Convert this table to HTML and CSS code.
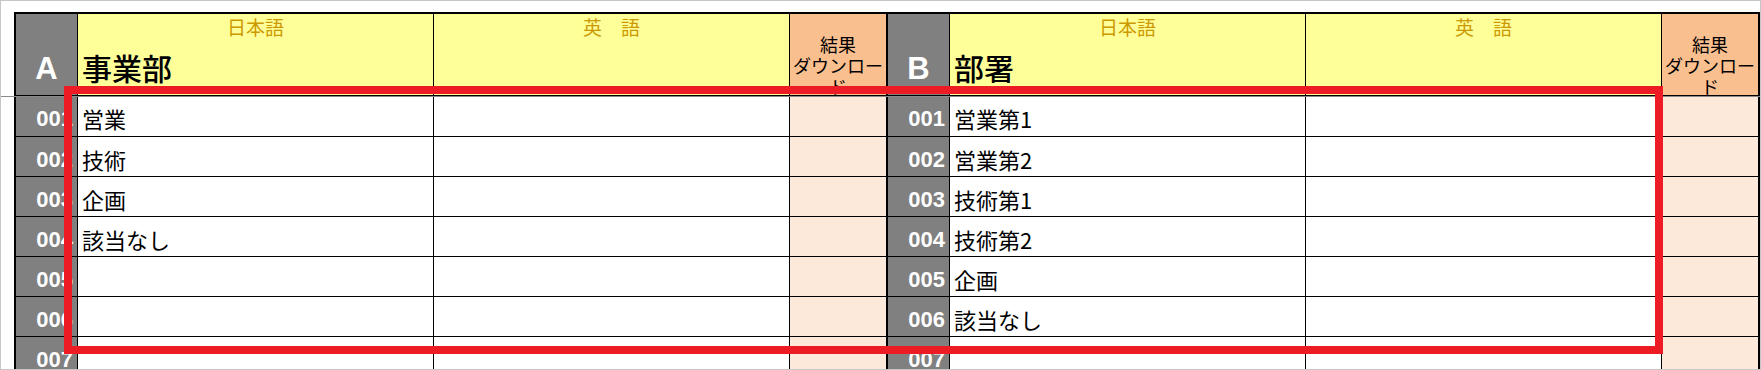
FILE: index.html
```html
<!DOCTYPE html>
<html lang="ja">
<head>
<meta charset="utf-8">
<title>Sheet</title>
<link rel="stylesheet" href="styles.css">
</head>
<body>
<div class="frame">
  <div class="sheet">
    <div class="cell hd-num"><span>A</span></div>
    <div class="cell hd-jp"><span class="label">日本語</span><span class="title">事業部</span></div>
    <div class="cell hd-en"><span class="label">英　語</span></div>
    <div class="cell hd-res sep"><span class="res-text">結果<br>ダウンロード</span></div>
    <div class="cell hd-num"><span>B</span></div>
    <div class="cell hd-jp"><span class="label">日本語</span><span class="title">部署</span></div>
    <div class="cell hd-en"><span class="label">英　語</span></div>
    <div class="cell hd-res"><span class="res-text">結果<br>ダウンロード</span></div>

    <div class="cell num">001</div><div class="cell txt">営業</div><div class="cell txt"></div><div class="cell res sep"></div>
    <div class="cell num">001</div><div class="cell txt">営業第1</div><div class="cell txt"></div><div class="cell res"></div>

    <div class="cell num">002</div><div class="cell txt">技術</div><div class="cell txt"></div><div class="cell res sep"></div>
    <div class="cell num">002</div><div class="cell txt">営業第2</div><div class="cell txt"></div><div class="cell res"></div>

    <div class="cell num">003</div><div class="cell txt">企画</div><div class="cell txt"></div><div class="cell res sep"></div>
    <div class="cell num">003</div><div class="cell txt">技術第1</div><div class="cell txt"></div><div class="cell res"></div>

    <div class="cell num">004</div><div class="cell txt">該当なし</div><div class="cell txt"></div><div class="cell res sep"></div>
    <div class="cell num">004</div><div class="cell txt">技術第2</div><div class="cell txt"></div><div class="cell res"></div>

    <div class="cell num">005</div><div class="cell txt"></div><div class="cell txt"></div><div class="cell res sep"></div>
    <div class="cell num">005</div><div class="cell txt">企画</div><div class="cell txt"></div><div class="cell res"></div>

    <div class="cell num">006</div><div class="cell txt"></div><div class="cell txt"></div><div class="cell res sep"></div>
    <div class="cell num">006</div><div class="cell txt">該当なし</div><div class="cell txt"></div><div class="cell res"></div>

    <div class="cell num">007</div><div class="cell txt"></div><div class="cell txt"></div><div class="cell res sep"></div>
    <div class="cell num">007</div><div class="cell txt"></div><div class="cell txt"></div><div class="cell res"></div>
  </div>
  <div class="freeze-line"></div>
  <div class="highlight"></div>
</div>
</body>
</html>
```
FILE: styles.css
```css
html, body {
  margin: 0;
  padding: 0;
  background: #ffffff;
}

body {
  font-family: "Noto Sans CJK JP", "Liberation Sans", sans-serif;
  overflow: hidden;
}

.frame {
  position: relative;
  box-sizing: border-box;
  width: 1761px;
  height: 370px;
  border: 1px solid #c6c6c6;
  padding: 11px 0 0 13px;
  overflow: hidden;
}

.sheet {
  display: grid;
  grid-template-columns: 61px 355px 355px 97px 61px 355px 355px 96px;
  grid-template-rows: 81px 40px 39px 39px 39px 39px 39px 39px;
  gap: 1px;
  width: 1746px;
  box-sizing: border-box;
  border: 2px solid #000;
  background: #000;
}

.cell {
  box-sizing: border-box;
  overflow: hidden;
  display: flex;
}

.sep {
  border-right: 1px solid #000;
}

/* header */
.hd-num {
  background: #808080;
  justify-content: center;
  align-items: flex-end;
  padding-bottom: 11px;
}
.hd-num span {
  font-family: "Liberation Sans", Arial, sans-serif;
  font-weight: bold;
  font-size: 31px;
  line-height: 1;
  color: #ffffff;
}

.hd-jp, .hd-en {
  background: #ffff99;
  flex-direction: column;
  justify-content: space-between;
}

.label {
  display: block;
  text-align: center;
  font-size: 19px;
  line-height: 1;
  padding-top: 3px;
  color: #cc9900;
}

.title {
  display: block;
  font-size: 30px;
  line-height: 1;
  padding: 0 0 13px 4px;
  color: #000;
  font-weight: 500;
}

.hd-res {
  background: #fabf8f;
  justify-content: center;
  align-items: flex-start;
  text-align: center;
}
.res-text {
  display: block;
  width: 92px;
  font-size: 18px;
  line-height: 21px;
  padding-top: 20px;
  color: #000;
  line-break: normal;
}

/* body rows */
.num {
  background: #808080;
  justify-content: flex-end;
  align-items: center;
  padding: 6px 4px 0 0;
  font-family: "Liberation Sans", Arial, sans-serif;
  font-weight: bold;
  font-size: 22px;
  line-height: 1;
  color: #ffffff;
}

.txt {
  background: #ffffff;
  align-items: center;
  padding: 4px 0 0 4px;
  font-size: 22px;
  line-height: 1;
  color: #000;
}

.res {
  background: #fde9d9;
}

.freeze-line {
  position: absolute;
  left: 0;
  top: 95px;
  width: 1761px;
  height: 1px;
  background: #8a8a8a;
}

.highlight {
  position: absolute;
  left: 63px;
  top: 85px;
  width: 1599px;
  height: 268px;
  box-sizing: border-box;
  border: 8px solid #ed1c24;
}
```
